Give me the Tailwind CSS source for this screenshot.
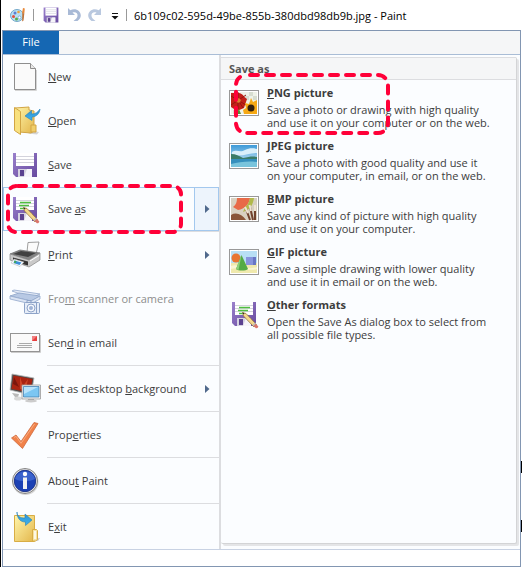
<!DOCTYPE html>
<html lang="en">
<head>
  <meta charset="UTF-8">
  <title>6b109c02-595d-49be-855b-380dbd98db9b.jpg - Paint</title>
  <meta name="viewport" content="width=device-width, initial-scale=1">
  <script src="https://cdn.jsdelivr.net/npm/@tailwindcss/browser@4"></script>
</head>
<body class="relative min-h-screen flex flex-col bg-white border-l border-black text-[#3c3c3c] text-[11px] font-['Open_Sans','Noto_Sans',sans-serif]">

  <!-- Shared gradients and icons -->
  <svg class="absolute w-0 h-0" aria-hidden="true">
    <defs>
      <linearGradient id="folder" x1="0" y1="0" x2="1" y2="1">
        <stop offset="0" stop-color="#fff6ac"/><stop offset="1" stop-color="#e3b64b"/>
      </linearGradient>
      <linearGradient id="purple" x1="0" y1="0" x2="1" y2="1">
        <stop offset="0" stop-color="#9a80cc"/><stop offset="1" stop-color="#674a9f"/>
      </linearGradient>
      <linearGradient id="arrow" x1="0" y1="0" x2="0" y2="1">
        <stop offset="0" stop-color="#2f8fd0"/><stop offset="1" stop-color="#3db4ee"/>
      </linearGradient>
      <linearGradient id="sky" x1="0" y1="0" x2="0" y2="1">
        <stop offset="0" stop-color="#3d9ad8"/><stop offset="1" stop-color="#e3f4fb"/>
      </linearGradient>
    </defs>
    <symbol id="floppy" viewBox="0 0 32 32">
      <path d="M4 4h24v24H7l-3-3z" fill="url(#purple)"/>
      <rect x="7" y="4" width="18" height="13" fill="#fff"/>
      <path d="M7 7.500h18M7 10.500h18M7 13.500h18" stroke="#d3d3dc"/>
      <rect x="9" y="20" width="14" height="8" fill="#d5d2e0"/>
      <rect x="11" y="21" width="4" height="6" fill="#5b4290"/>
      <path d="M18 20h5v8h-8z" fill="#f6f5fa"/>
    </symbol>
    <symbol id="floppy-pencil" viewBox="0 0 32 32">
      <use href="#floppy" width="32" height="32"/>
      <path d="M11 9.500h11M10 12.500h10M11 15.500h5" stroke="#4fbe3f" stroke-width="1.500"/>
      <path d="M14.500 14.500l3.500 1 10.500 11-2.500 2.500-10.500-11z" fill="#f3d78b" stroke="#8b6a34" stroke-width=".7"/>
      <path d="M14.500 14.500l2 .8-1 1.200z" fill="#222"/>
      <path d="M27.500 25.500l2.700 2.700c.5 1-1.200 2.500-2.300 2l-2.700-2.500z" fill="#d9756b"/>
      <path d="M27.500 25l-2.500 2.500" stroke="#bbb" stroke-width="1.500"/>
    </symbol>
  </svg>

  <!-- Title bar -->
  <header class="flex items-center h-[30px] pl-[9px] text-black">
    <svg class="w-4 h-4" viewBox="0 0 16 16">
      <ellipse cx="7" cy="8.500" rx="6.500" ry="6" fill="#b9dff3" stroke="#5795bd" stroke-width=".8"/>
      <circle cx="5" cy="6" r="1.500" fill="#5b7fd1"/><circle cx="8.500" cy="5" r="1.300" fill="#eaa23c"/>
      <circle cx="3.500" cy="9.500" r="1.500" fill="#e0503c"/><circle cx="6.500" cy="12" r="1.500" fill="#57ad46"/>
      <circle cx="9.500" cy="10.500" r="1.500" fill="#fff" stroke="#5795bd" stroke-width=".6"/>
      <path d="M13 1l1.800.5-.5 5-2.300-.5z" fill="#e8893a"/><path d="M12.300 6l2 .4-.8 7-1.300 1z" fill="#c07236"/>
    </svg>
    <span class="w-px h-3 ml-[7px] bg-[#999]"></span>
    <button class="ml-[9px]" aria-label="Save"><svg class="w-4 h-4" viewBox="3 3 26 26"><use href="#floppy" width="32" height="32"/></svg></button>
    <button class="ml-[7px]" aria-label="Undo"><svg class="w-4 h-4" viewBox="0 0 16 16"><path d="M2 1v7h7L6.500 5.500c3-1 5.500.5 5 3.500-.3 2-2 3.500-4 5h4c2-1.500 3.300-3.300 3.300-5.500C14.800 3.500 9 .5 4.300 3.300z" fill="#a9bad6"/></svg></button>
    <button class="ml-[5px]" aria-label="Redo"><svg class="w-4 h-4" viewBox="0 0 16 16"><path d="M14 1v7H7l2.500-2.500c-3-1-5.500.5-5 3.500.3 2 2 3.500 4 5h-4C2.500 12.500 1.200 10.700 1.200 8.500 1.200 3.500 7 .5 11.700 3.300z" fill="#b9c8df"/></svg></button>
    <button class="ml-2" aria-label="Customize Quick Access Toolbar"><svg class="w-2 h-2 mt-1" viewBox="0 0 8 8"><path d="M1 .5h6" stroke="#111"/><path d="M.5 3h7L4 6.500z" fill="#111"/></svg></button>
    <span class="w-px h-3 ml-[7px] bg-[#999]"></span>
    <h1 class="ml-[7px] pt-[2px] whitespace-nowrap">6b109c02-595d-49be-855b-380dbd98db9b.jpg - Paint</h1>
  </header>

  <div class="flex flex-col flex-1 ml-px mr-px border border-[#8296b2]">
    <div class="h-6 bg-[#f5f6f7] border-b border-[#a9bdd6]">
      <button class="w-14 h-[23px] bg-[#1567b3] text-white">File</button>
    </div>

    <!-- File menu -->
    <main class="flex bg-[#fbfdff] border-b border-[#c8d2e3]">
      <nav class="w-[218px] shrink-0 border-r-2 border-[#dcdde0]">
        <button class="flex items-center gap-[7px] w-full h-11 pl-[6px]">
          <svg class="w-8 h-8" viewBox="0 0 32 32">
            <path d="M5.500 2.500h16l5 5v21h-21z" fill="#fafafa" stroke="#8e8e8e"/>
            <path d="M21.500 2.500v5h5" fill="#e9e9e9" stroke="#8e8e8e"/><path d="M6 29.500h21.500V9" fill="none" stroke="#d5d5d5"/>
          </svg>
          <span><u>N</u>ew</span>
        </button>
        <button class="flex items-center gap-[7px] w-full h-11 pl-[6px]">
          <svg class="w-8 h-8" viewBox="0 0 32 32">
            <path d="M24 26l6 1-2 2.500-9-1z" fill="#d5d5d5"/>
            <path d="M6 3l14-1v3l5 1v20l-3 2-12-1z" fill="url(#folder)" stroke="#d2a544"/>
            <path d="M5.500 2.500l6 4v23l-6-4z" fill="#f8e17f" stroke="#d2a544"/>
            <path d="M22 20h5v7h-5z" fill="#f0ce6a" stroke="#d2a544"/>
            <path d="M31 4c-.5 5-3.500 7.500-8 8v3.500L16 11l6.500-5.500V9c4 0 6.500-2 8.500-5z" fill="url(#arrow)" stroke="#2782b8" stroke-width=".6"/>
          </svg>
          <span><u>O</u>pen</span>
        </button>
        <button class="flex items-center gap-[7px] w-full h-11 pl-[6px]">
          <svg class="w-8 h-8"><use href="#floppy"/></svg>
          <span><u>S</u>ave</span>
        </button>
        <div class="flex h-11 border border-[#a3c8ee]">
          <button class="flex items-center gap-[7px] flex-1 pl-[5px]">
            <svg class="w-8 h-8"><use href="#floppy-pencil"/></svg>
            <span>Save <u>a</u>s</span>
          </button>
          <button class="flex items-center w-6 pl-[10px] bg-[#edf4fc] border-l border-[#a3c8ee]" aria-label="Save as options">
            <svg class="w-[5px] h-2" viewBox="0 0 5 8"><path d="M0 0l4.500 4L0 8z" fill="#50698c"/></svg>
          </button>
        </div>
        <hr class="ml-11 mb-px border-[#dcdde0]">

        <button class="flex items-center gap-[7px] w-full h-11 pl-[6px] pr-[9px]">
          <svg class="w-8 h-8" viewBox="0 0 32 32">
            <path d="M19 3.500l11-.5-3 12-9-2z" fill="#fbfbfb" stroke="#888" stroke-width=".8"/>
            <path d="M1 15l10-4 20 3-11 7z" fill="#858585" stroke="#666" stroke-width=".7"/>
            <path d="M4 15l8-3 15 2-8 4z" fill="#414141"/>
            <path d="M1 15l19 6 11-7v7l-11 7L1 21z" fill="#c9c9c9" stroke="#858585" stroke-width=".7"/>
            <path d="M4 18.500l15 4v4l-15-4z" fill="#333"/>
            <path d="M5 20l10 3-4 4.500-9-3.500z" fill="#f8fbff" stroke="#aaa" stroke-width=".5"/>
            <path d="M5.500 21.500l7 2-2 2.500-6-2z" fill="#3d8fd8"/><path d="M5.500 21.500l2 .6-1 2.200-1.500-.4z" fill="#3fa857"/>
            <path d="M21 22l9-5.500" stroke="#fff"/>
          </svg>
          <span class="flex-1 text-left"><u>P</u>rint</span>
          <svg class="w-[5px] h-2" viewBox="0 0 5 8"><path d="M0 0l4.500 4L0 8z" fill="#50698c"/></svg>
        </button>
        <button class="flex items-center gap-[7px] w-full h-11 pl-[6px] text-[#8d8d8d]" disabled>
          <svg class="w-8 h-8" viewBox="0 0 32 32">
            <path d="M3 8l2-1 26 4-9 4z" fill="#e4ebf7" stroke="#93a8cc" stroke-width=".8"/>
            <path d="M1 13l9-3 21 3-9 5z" fill="#b8c9e4" stroke="#8da3c8" stroke-width=".8"/>
            <path d="M1 13l21 5 9-5v3l-9 5-21-5z" fill="#dbe4f3" stroke="#93a8cc" stroke-width=".8"/>
            <rect x="15.500" y="19.500" width="15" height="11" rx="1" fill="#e6edf8" stroke="#8da3c8"/>
            <path d="M18 19v-1.500h4V19M27.500 20v10" stroke="#8da3c8" fill="none"/>
            <circle cx="22" cy="25" r="4" fill="#f4f7fc" stroke="#8da3c8"/><circle cx="22" cy="25" r="2" fill="#9fb3d6"/>
          </svg>
          <span>Fro<u>m</u> scanner or camera</span>
        </button>
        <button class="flex items-center gap-[7px] w-full h-11 pl-[6px]">
          <svg class="w-8 h-8" viewBox="0 0 32 32">
            <rect x="1.500" y="6.500" width="29" height="18" fill="#fafafa" stroke="#949494"/>
            <path d="M2 25.500h29.500V8" fill="none" stroke="#ccc"/>
            <rect x="23" y="9" width="5" height="5" fill="#e63e3e"/><path d="M23 9h5l-5 5z" fill="#f08080"/>
            <path d="M10 16.500h13M8 18.500h15M8 20.500h15" stroke="#aaa"/>
          </svg>
          <span>Sen<u>d</u> in email</span>
        </button>
        <hr class="ml-11 mb-px border-[#dcdde0]">

        <button class="flex items-center gap-[7px] w-full h-11 pl-[6px] pr-[9px]">
          <svg class="w-8 h-8" viewBox="0 0 32 32">
            <path d="M3 20l7 1-1 3H6z" fill="#b9b9b9"/><ellipse cx="9" cy="25.500" rx="4" ry="2" fill="#d9d9d9"/>
            <path d="M3 1l22 4-3 17L1 17z" fill="#4d4d4d" stroke="#bbb" stroke-width=".8"/>
            <path d="M4.500 2.500l19 3.500-2.500 13.500L2.500 16z" fill="#a92412"/>
            <path d="M11 4l3 9 5-7-2 10 4-4-1 6-9-2z" fill="#cf4426"/><path d="M5 4l5 10-6-3z" fill="#7b160d"/>
            <path d="M19 26h6v2h-6z" fill="#aaa"/><ellipse cx="22" cy="28" rx="6" ry="1.500" fill="#ccc"/>
            <path d="M13 12h18.500v14H13z" fill="#f3f3f3" stroke="#999" stroke-width=".8"/>
            <path d="M14.500 13.500h15.500v10.500H14.500z" fill="#7cc6f2" stroke="#3d79ab" stroke-width=".7"/>
            <path d="M15 14h14l-14 7z" fill="#b8e3fb"/>
          </svg>
          <span class="flex-1 text-left whitespace-nowrap">Set as desktop <u>b</u>ackground</span>
          <svg class="w-[5px] h-2" viewBox="0 0 5 8"><path d="M0 0l4.500 4L0 8z" fill="#50698c"/></svg>
        </button>
        <hr class="ml-11 mb-px border-[#dcdde0]">
        <button class="flex items-center gap-[7px] w-full h-11 pl-[6px]">
          <svg class="w-8 h-8" viewBox="0 0 32 32">
            <path d="M2.500 19l4.500-3 5 6.500L25 3.500l4 1L13.500 29.500z" fill="#f1824a" stroke="#cf6a3c" stroke-width=".8" stroke-linejoin="round"/>
            <path d="M5 18.500l2-1.200 5 7L25.500 5" fill="none" stroke="#f8ab80"/>
          </svg>
          <span>Prop<u>e</u>rties</span>
        </button>
        <hr class="ml-11 mb-px border-[#dcdde0]">
        <button class="flex items-center gap-[7px] w-full h-11 pl-[6px]">
          <svg class="w-8 h-8" viewBox="0 0 32 32">
            <circle cx="16.500" cy="17" r="13" fill="#d5d5d5"/>
            <circle cx="16" cy="16" r="12.500" fill="#e6e6e6" stroke="#858585"/>
            <circle cx="16" cy="16" r="10.700" fill="#1c41b4" stroke="#20368a"/>
            <path d="M6 14a10.300 10.300 0 0 1 20 0c-6 3-14 3-20 0z" fill="#3a62cc"/>
            <circle cx="16" cy="9" r="2.200" fill="#fff"/>
            <path d="M14 12.500h4V24h-4z" fill="#f2f2f2"/>
          </svg>
          <span>Abou<u>t</u> Paint</span>
        </button>
        <hr class="ml-11 mb-px border-[#dcdde0]">
        <button class="flex items-center gap-[7px] w-full h-11 pl-[6px]">
          <svg class="w-8 h-8" viewBox="0 0 32 32">
            <path d="M26 28l5-1-2 3h-5z" fill="#ccc"/>
            <path d="M5.500 4.500h20v26h-20z" fill="url(#folder)" stroke="#d8ad45"/>
            <path d="M23.500 18.500h4l1 1v9l-2 1.500h-3z" fill="#f6e3a0" stroke="#d8ad45"/><path d="M26 20v8" stroke="#fff" stroke-width="1.500"/>
            <path d="M8 1c0 4 3 6 8 6V3l7 6-6.500 5.500V11C11 11 8 7 8 1z" fill="url(#arrow)" stroke="#2782b8" stroke-width=".6"/>
          </svg>
          <span>E<u>x</u>it</span>
        </button>
      </nav>

      <!-- Save as panel -->
      <section class="flex-1 mt-[2px] mr-[3px] mb-[5px] bg-[#fbfdff] rounded-[2px] border-r border-b border-[#d3d4d6] shadow-[2px_2px_0_#e4e5e7]">
        <h2 class="h-[23px] pl-2 leading-[22px] font-bold text-[#555] bg-[#f5f6f7] border-t border-b border-[#dcdde0]">Save as</h2>
        <button class="flex w-full h-[53px] mt-1 pl-2 pt-px gap-2 text-left">
          <svg class="w-[30px] h-[26px] mt-[5px] shrink-0" viewBox="0 0 30 26">
            <rect x=".5" y=".5" width="29" height="25" fill="#fff" stroke="#999"/>
            <path d="M2 2h26v22H2z" fill="#eef2e8"/><path d="M20 2h4v4h-4zM24 6h4v4h-4zM16 6h4v4h-4zM4 20h4v4H4z" fill="#d6ddd0"/>
            <circle cx="9" cy="10" r="7" fill="#c22118"/><path d="M2 3h8l8 6-3 9-7 3-6-4z" fill="#c22118"/>
            <path d="M9 2v17M2 6l15 9M2 15L17 5M5 3l9 15" stroke="#951510" stroke-width="1"/><circle cx="9.500" cy="10.500" r="2.200" fill="#d98032"/>
            <path d="M22 8l2 4 4-2v14H15l-1-4 3-2-1-5 4 1z" fill="#f6a914"/>
            <circle cx="22" cy="18" r="3.500" fill="#33200d"/><path d="M10 19l2 5H7z" fill="#578b35"/>
          </svg>
          <span><b class="block leading-4"><u>P</u>NG picture</b><span class="block pt-[2px] leading-[13px]">Save a photo or drawing with high quality<br>and use it on your computer or on the web.</span></span>
        </button>
        <button class="flex w-full h-[53px] pl-2 pt-px gap-2 text-left">
          <svg class="w-[30px] h-[26px] mt-[5px] shrink-0" viewBox="0 0 30 26">
            <rect x=".5" y=".5" width="29" height="25" fill="#fff" stroke="#999"/>
            <path d="M2 2h26v22H2z" fill="url(#sky)"/>
            <path d="M3 9c5-3 8 1 13-2 4-2 8-2 12-1v4c-8 0-14 4-25 2z" fill="#d9effa"/>
            <path d="M2 11c5 0 8 2 12 4 6-1 9-2 14-1v3H2z" fill="#3a7c68"/>
            <path d="M2 16h26v8H2z" fill="#358fbd"/><path d="M2 21c8-2 17-3 26-2v5H2z" fill="#79c4dc"/>
          </svg>
          <span><b class="block leading-4"><u>J</u>PEG picture</b><span class="block pt-[2px] leading-[13px]">Save a photo with good quality and use it<br>on your computer, in email, or on the web.</span></span>
        </button>
        <button class="flex w-full h-[53px] pl-2 pt-px gap-2 text-left">
          <svg class="w-[30px] h-[26px] mt-[5px] shrink-0" viewBox="0 0 30 26">
            <rect x=".5" y=".5" width="29" height="25" fill="#fff" stroke="#999"/>
            <path d="M2 2h26v22H2z" fill="#d8d1c2"/>
            <path d="M8 2h13c-1 6-5 11-12 12l-5-3c3-2 4-5 4-9z" fill="#e86a48"/>
            <path d="M21 2h4c-1 7-4 12-11 14l2-5c3-2 4-5 5-9z" fill="#b1b94b"/>
            <path d="M2 19c5-3 11-1 15 5H2z" fill="#8a5538"/>
            <path d="M17 13l4 11M21 11l3 13M26 10v14" stroke="#71422d" stroke-width="2"/>
            <path d="M16 11l3 6M20.500 9l1.500 6M26 9v6" stroke="#eee4d3" stroke-width="2"/>
          </svg>
          <span><b class="block leading-4"><u>B</u>MP picture</b><span class="block pt-[2px] leading-[13px]">Save any kind of picture with high quality<br>and use it on your computer.</span></span>
        </button>
        <button class="flex w-full h-[53px] pl-2 pt-px gap-2 text-left">
          <svg class="w-[30px] h-[26px] mt-[5px] shrink-0" viewBox="0 0 30 26">
            <rect x=".5" y=".5" width="29" height="25" fill="#fff" stroke="#999"/>
            <path d="M2 2h26v12H2z" fill="#b8dff5"/><path d="M2 14h26v10H2z" fill="#efe9ad"/><path d="M2 17c8-3 16 5 26 1v2c-9 3-18-3-26 0z" fill="#faf6d4"/>
            <rect x="17" y="8" width="10" height="8" fill="#8794dd"/><path d="M24 8h3v8h-3z" fill="#6876c4"/>
            <circle cx="7" cy="9" r="4.500" fill="#e87532"/>
            <path d="M12.500 6L19 20c-2 2-10 2-12 0z" fill="#54ab45"/><path d="M12.500 6l-3 15-2.500-1z" fill="#8fd07c"/>
          </svg>
          <span><b class="block leading-4"><u>G</u>IF picture</b><span class="block pt-[2px] leading-[13px]">Save a simple drawing with lower quality<br>and use it in email or on the web.</span></span>
        </button>
        <button class="flex w-full h-[53px] pl-2 pt-px gap-2 text-left">
          <svg class="w-[30px] h-[30px] mt-[2px] shrink-0" viewBox="1 1 30 30"><use href="#floppy-pencil" width="32" height="32"/></svg>
          <span><b class="block leading-4"><u>O</u>ther formats</b><span class="block pt-[2px] leading-[13px]">Open the Save As dialog box to select from<br>all possible file types.</span></span>
        </button>
      </section>
    </main>
    <footer class="flex-1 min-h-4 bg-white"></footer>
  </div>

  <!-- Slivers of the page behind the menu -->
  <span class="absolute right-0 top-[461px] w-px h-3 bg-black"></span>
  <span class="absolute right-0 top-[520px] w-px h-3 bg-black"></span>

  <!-- Red callouts around Save as and PNG picture -->
  <svg class="absolute left-[5px] top-[183px] w-[178px] h-[52px] pointer-events-none" fill="none" stroke="#ff0038" stroke-width="4" stroke-linecap="round">
    <rect x="2" y="3" width="173" height="46" rx="8" stroke-dasharray="8 8" stroke-dashoffset="-2"/>
  </svg>
  <svg class="absolute left-[233px] top-[72px] w-[157px] h-[64px] pointer-events-none" fill="none" stroke="#ff0038" stroke-width="4" stroke-linecap="round">
    <rect x="2" y="3" width="152" height="58" rx="10" stroke-dasharray="8 8" stroke-dashoffset="-4"/>
  </svg>
</body>
</html>
